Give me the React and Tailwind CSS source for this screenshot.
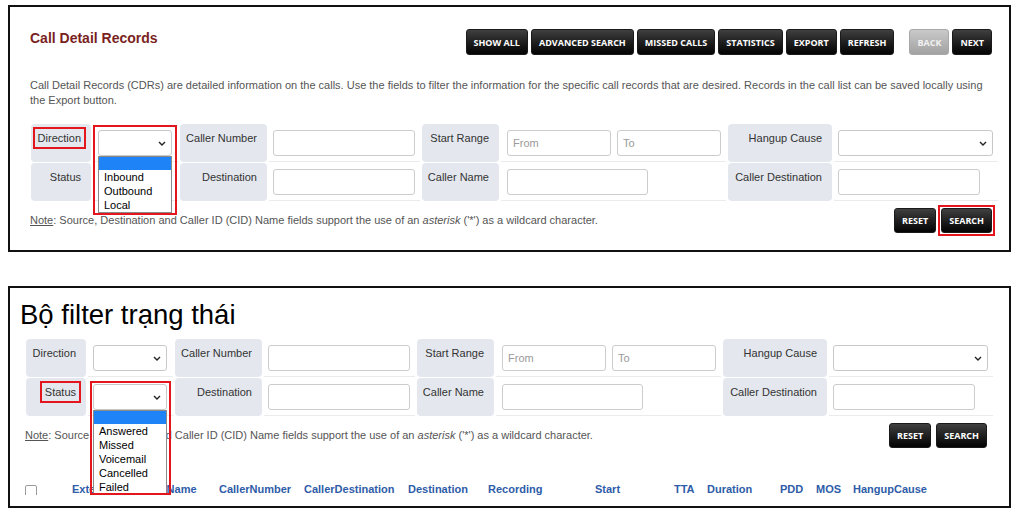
import React from 'react';

const directionOptions = ['Inbound', 'Outbound', 'Local'];
const statusOptions = ['Answered', 'Missed', 'Voicemail', 'Cancelled', 'Failed'];

const headers = [
  ['Extension', 'w-[64px]'],
  ['CallerName', 'w-[83px]'],
  ['CallerNumber', 'w-[85px]'],
  ['CallerDestination', 'w-[104px]'],
  ['Destination', 'w-[80px]'],
  ['Recording', 'w-[107px]'],
  ['Start', 'w-[79px]'],
  ['TTA', 'w-[33px]'],
  ['Duration', 'w-[73px]'],
  ['PDD', 'w-[36px]'],
  ['MOS', 'w-[37px]'],
  ['HangupCause', 'w-[90px]'],
];

const Btn = ({ children, muted, short }) => (
  <button
    className={`${short ? 'h-[25px]' : 'h-[26px]'} px-[7px] rounded-[3px] border text-[9px] font-bold font-['Open_Sans',sans-serif] leading-none ${
      muted
        ? 'bg-linear-to-b from-[#c9c9c9] to-[#a2a2a2] border-[#a8a8a8] text-[#f1f1f1]'
        : 'bg-linear-to-b from-[#404040] to-[#050505] border-[#1a1a1a] text-white'
    }`}
  >
    {children}
  </button>
);

const Chevron = () => (
  <svg width="8" height="5" viewBox="0 0 8 5" className="absolute right-[5px] top-[10px]">
    <path d="M1 1l3 3 3-3" fill="none" stroke="#222" strokeWidth="1.4" />
  </svg>
);

const Select = ({ className }) => (
  <div className={`relative h-[26px] border border-[#c9c9c9] rounded-[3px] bg-white ${className}`}>
    <Chevron />
  </div>
);

const Input = ({ className, placeholder }) => (
  <input
    readOnly
    placeholder={placeholder}
    className={`block h-[26px] border border-[#cccccc] rounded-[3px] px-[5px] text-[11px] bg-white outline-none placeholder:text-[#9a9a9a] ${className}`}
  />
);

const Label = ({ children, boxed }) => (
  <div className="bg-[#e4e8ee] rounded-[4px] pt-[8px] pr-[10px] text-right text-[11px] leading-[13px] text-[#333]">
    {boxed ? (
      <span className="outline-2 outline-[#e3161d] outline-offset-[3px]">{children}</span>
    ) : (
      children
    )}
  </div>
);

const Cell = ({ children, className = '' }) => (
  <div className={`border-b border-[#ebebeb] pt-[6px] ${className}`}>{children}</div>
);

const Dropdown = ({ options }) => (
  <div className="absolute left-0 top-[26px] w-full bg-white border border-[#8a8a8a] text-[11px] leading-[14px] text-black">
    <div className="h-[13px] bg-[#1e83f7]" />
    {options.map((o) => (
      <div key={o} className="pl-[5px] h-[14px]">
        {o}
      </div>
    ))}
  </div>
);

function FilterForm({ openDirection, openStatus }) {
  return (
    <div className="grid grid-cols-[60px_85px_87px_151px_77px_225px_104px_164px] auto-rows-[38px] gap-x-[2px] gap-y-[1px]">
      <Label boxed={openDirection}>Direction</Label>
      <Cell className={openDirection ? 'pl-[5px] relative z-20' : 'pl-[5px]'}>
        <div className="relative w-[74px]">
          <Select className="w-[74px]" />
          {openDirection && (
            <>
              <Dropdown options={directionOptions} />
              <div className="absolute left-[-5px] top-[-5px] right-[-5px] h-[90px] border-2 border-[#e3161d]" />
            </>
          )}
        </div>
      </Cell>
      <Label>Caller Number</Label>
      <Cell className="pl-[4px]">
        <Input className="w-[142px]" />
      </Cell>
      <Label>Start Range</Label>
      <Cell className="pl-[6px] flex gap-[6px]">
        <Input className="w-[104px]" placeholder="From" />
        <Input className="w-[104px]" placeholder="To" />
      </Cell>
      <Label>Hangup Cause</Label>
      <Cell className="pl-[4px]">
        <Select className="w-[155px]" />
      </Cell>

      <Label boxed={openStatus}>Status</Label>
      <Cell className={openStatus ? 'pl-[5px] relative z-20' : 'pl-[5px]'}>
        <div className="relative w-[74px]">
          <Select className="w-[74px]" />
          {openStatus && (
            <>
              <Dropdown options={statusOptions} />
              <div className="absolute left-[-3px] top-[-3px] right-[-4px] h-[114px] border-2 border-[#e3161d]" />
            </>
          )}
        </div>
      </Cell>
      <Label>Destination</Label>
      <Cell className="pl-[4px]">
        <Input className="w-[142px]" />
      </Cell>
      <Label>Caller Name</Label>
      <Cell className="pl-[6px]">
        <Input className="w-[141px]" />
      </Cell>
      <Label>Caller Destination</Label>
      <Cell className="pl-[4px]">
        <Input className="w-[142px]" />
      </Cell>
    </div>
  );
}

const NoteRow = ({ boxedSearch }) => (
  <div className="flex items-center justify-between mt-[7px] pr-[6px]">
    <p className="text-[11px] leading-[13px] text-[#555] -ml-[1px]">
      <span className="underline">Note</span>: Source, Destination and Caller ID (CID) Name fields support the use
      of an <i>asterisk</i> ('*') as a wildcard character.
    </p>
    <div className="flex gap-[5px]">
      <Btn short>RESET</Btn>
      <span className={boxedSearch ? 'outline-2 outline-[#e3161d] outline-offset-[1px] flex' : 'flex'}>
        <Btn short>SEARCH</Btn>
      </span>
    </div>
  </div>
);

export default function App() {
  return (
    <div className="w-[1020px] h-[515px] bg-white overflow-hidden pt-[5px] pl-[8px] font-['Liberation_Sans',Arial,sans-serif]">
      <section className="w-[1003px] h-[247px] border-2 border-[#111] pl-[20px] pr-[17px]">
        <div className="flex items-start justify-between pt-[22px]">
          <h1 className="text-[14px] leading-[18px] font-bold text-[#7a1f22]">Call Detail Records</h1>
          <div className="flex gap-[3px]">
            <Btn>SHOW ALL</Btn>
            <Btn>ADVANCED SEARCH</Btn>
            <Btn>MISSED CALLS</Btn>
            <Btn>STATISTICS</Btn>
            <Btn>EXPORT</Btn>
            <Btn>REFRESH</Btn>
            <span className="ml-[12px] flex">
              <Btn muted>BACK</Btn>
            </span>
            <Btn>NEXT</Btn>
          </div>
        </div>
        <p className="mt-[23px] text-[11px] leading-[15px] text-[#555]">
          Call Detail Records (CDRs) are detailed information on the calls. Use the fields to filter the information
          for the specific call records that are desired. Records in the call list can be saved locally using the
          Export button.
        </p>
        <div className="mt-[16px] ml-[1px] w-[967px]">
          <FilterForm openDirection />
          <NoteRow boxedSearch />
        </div>
      </section>

      <section className="mt-[34px] w-[1003px] h-[222px] border-2 border-[#111]">
        <div className="h-[207px] overflow-hidden pl-[16px]">
          <h2 className="pt-[11px] -ml-[6px] text-[27.5px] leading-[32px] text-black">Bộ filter trạng thái</h2>
          <div className="mt-[8px] w-[967px]">
            <FilterForm openStatus />
            <NoteRow />
          </div>
          <div className="flex items-start mt-[35px] text-[11px] font-bold leading-[13px] text-[#2e5ca8]">
            <div className="w-[46px]">
              <div className="w-[12px] h-[12px] mt-[2px] -ml-[1px] border border-[#9a9a9a] rounded-[2px] bg-white" />
            </div>
            {headers.map(([h, w]) => (
              <div key={h} className={`${w} shrink-0`}>
                {h}
              </div>
            ))}
          </div>
        </div>
      </section>
    </div>
  );
}
